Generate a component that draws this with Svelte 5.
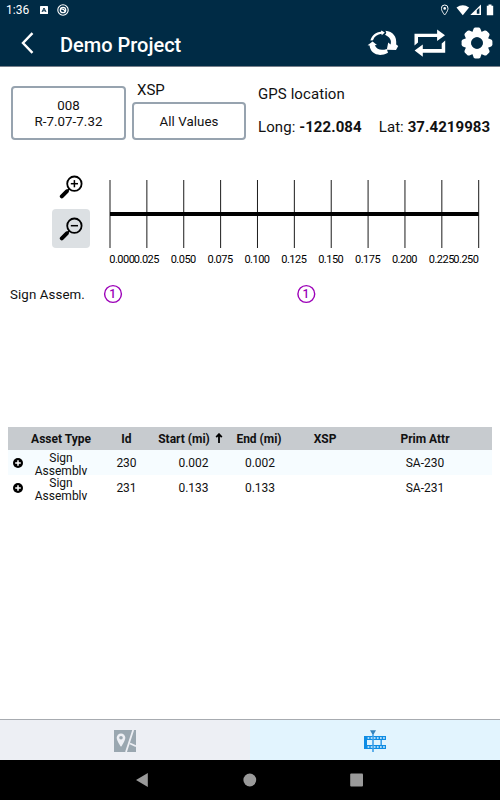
<script lang="ts">
  interface Asset {
    type: string;
    id: number;
    start: string;
    end: string;
    xsp: string;
    attr: string;
  }

  const columns = ["Asset Type", "Id", "Start (mi)", "End (mi)", "XSP", "Prim Attr"];

  const assets: Asset[] = [
    { type: "Sign Assembly", id: 230, start: "0.002", end: "0.002", xsp: "", attr: "SA-230" },
    { type: "Sign Assembly", id: 231, start: "0.133", end: "0.133", xsp: "", attr: "SA-231" },
  ];

  // ruler geometry, in svg units
  const left = 10;
  const step = 36.87;
  const ticks = Array.from({ length: 11 }, (_, i) => {
    const x = left + i * step;
    let labelX = x - 0.5;
    if (i === 0) labelX = x + 11.8;
    if (i === 10) labelX = x - 12.8;
    return { x, labelX, label: (i * 0.025).toFixed(3) };
  });

  const markers = [
    { x: 13, count: 1 },
    { x: 206.3, count: 1 },
  ];

  const teeth = [0, 45, 90, 135, 180, 225, 270, 315];
</script>

<div class="screen">
  <div class="status">
    <span class="clock">1:36</span>
    <svg class="badge-a" width="8" height="8" viewBox="0 0 8 8">
      <rect width="8" height="8" rx="0.6" fill="#fff" />
      <path d="M2 6 4 2 6 6M2.8 4.8h2.4" fill="none" stroke="#002b45" stroke-width="1" />
    </svg>
    <svg class="badge-ring" width="12" height="12" viewBox="0 0 12 12" fill="none" stroke="#fff">
      <circle cx="6" cy="6" r="5.2" stroke-width="1.1" />
      <circle cx="6" cy="6" r="2.7" stroke-width="1.3" />
      <path d="M3 4.6 6.5 5.4 8.5 8" stroke-width="1.2" />
    </svg>
    <svg class="signals" width="56" height="14" viewBox="0 0 56 14">
      <path d="M3.7 2a3.3 3.3 0 0 0-3.3 3.4C.4 8 3.7 12 3.7 12S7 8 7 5.4A3.3 3.3 0 0 0 3.7 2Z" fill="none" stroke="#fff" stroke-width="1" />
      <circle cx="3.7" cy="5.4" r="1.3" fill="#fff" />
      <path d="M15.5 4.6Q21.8 0 28.1 4.6L21.8 12.2Z" fill="#fff" />
      <path d="M29.3 12 40 1.5V12Z" fill="#fff" />
      <path d="M35.8 7.3 38.4 4.8V10.7H35.8Z" fill="#002b45" />
      <path d="M45.8 2.8h1.7V1.4h3v1.4h1.7v9.5h-6.4Z" fill="#fff" />
    </svg>
  </div>

  <header>
    <svg class="back" width="14" height="22" viewBox="0 0 14 22">
      <path d="M12.5 1.2 3 11l9.5 9.8" fill="none" stroke="#fff" stroke-width="2.4" />
    </svg>
    <h1>Demo Project</h1>
    <div class="actions">
      <svg width="32" height="28" viewBox="0 0 32 28" fill="#fff">
        <path d="M18.4 1.8C26 2.4 30 7.6 29.2 15.6l2 1.3-2.2 4.2-9.2-.3 1.4-7.2 2.4 1.9c1.2-4.2-.6-7.4-5.6-9.7 1.6-1.2 1.6-2.4.4-4Z" />
        <path d="M5.6 12.6 10 16l-2.2.3c2 4.3 6.4 5.6 12 3.6l1.2 3.8C12 28.6 3.2 24.8 2.6 16.6L.6 16.2Z" />
        <path d="M3.4 11.4C4.8 6.4 9 3 14 2.7l.4-1.3 3.4 2.2-3 2.6-.4-1.4C10.6 5.2 7.4 7.4 6 11.2Z" />
      </svg>
      <svg width="32" height="28" viewBox="0 0 32 28" fill="#fff">
        <path d="M.5 16.4V4.7h22.6V.4L31 6.2l-7.9 5.8V8H4v5.6Z" />
        <path d="M31.2 11.4v12.3H8.8v4L.6 21.6l8.2-6V20H27.7v-5.6Z" />
      </svg>
      <svg width="32" height="32" viewBox="-16 -16 32 32">
        {#each teeth as angle}
          <path d="M-5.4-9 -3.4-14.2Q-2.8-15.4-1.6-15.4H1.6Q2.8-15.4 3.4-14.2L5.4-9Z" fill="#fff" transform="rotate({angle})" />
        {/each}
        <circle r="8.8" fill="none" stroke="#fff" stroke-width="6" />
        <circle r="5.8" fill="#002b45" />
      </svg>
    </div>
  </header>

  <main>
    <section class="filters">
      <button class="box route">008<br />R-7.07-7.32</button>
      <div class="xsp">
        <span class="xsp-label">XSP</span>
        <button class="box values">All Values</button>
      </div>
      <div class="gps">
        <div class="gps-title">GPS location</div>
        <div class="coords">
          <span>Long: <b>-122.084</b></span>
          <span>Lat: <b>37.4219983</b></span>
        </div>
      </div>
    </section>

    <section class="ruler">
      <div class="zoom">
        {#each ["in", "out"] as mode}
          <button class="zoom-btn" class:active={mode === "out"} aria-label="Zoom {mode}">
            <svg width="24" height="24" viewBox="0 0 24 24" fill="none" stroke="#000">
              <circle cx="15.4" cy="8.7" r="7.2" stroke-width="1.8" />
              <path d="M11.8 8.7h7.2" stroke-width="1.5" />
              {#if mode === "in"}
                <path d="M15.4 5.1v7.2" stroke-width="1.5" />
              {/if}
              <path d="m10.3 13.9-2 2" stroke-width="2" />
              <path d="m7.8 16.3-5 5" stroke-width="4" stroke-linecap="round" />
            </svg>
          </button>
        {/each}
      </div>
      <svg class="scale" width="400" height="96" viewBox="0 0 400 96">
        {#each ticks as tick}
          <path d="M{tick.x} 5v68" stroke="#000" stroke-width="0.9" />
          <text x={tick.labelX} y="87.5" text-anchor="middle">{tick.label}</text>
        {/each}
        <path d="M10 39h368.7" stroke="#000" stroke-width="4" />
      </svg>
    </section>

    <section class="lane">
      <span class="lane-label">Sign Assem.</span>
      <svg width="400" height="20" viewBox="0 0 400 20">
        {#each markers as marker}
          <circle cx={marker.x} cy="10" r="8.4" fill="none" stroke="#9c00b8" stroke-width="1.4" />
          <text x={marker.x - 0.4} y="13.8" text-anchor="middle">{marker.count}</text>
        {/each}
      </svg>
    </section>

    <section class="table">
      <div class="row head">
        <span></span>
        {#each columns as column}
          <span>
            {column}
            {#if column === "Start (mi)"}
              <svg width="8" height="10" viewBox="0 0 8 10">
                <path d="M4 10V2M1.2 4.2 4 1.2l2.8 3" fill="none" stroke="#000" stroke-width="1.8" />
              </svg>
            {/if}
          </span>
        {/each}
      </div>
      {#each assets as asset}
        <div class="row">
          <span>
            <svg class="plus" width="10" height="10" viewBox="0 0 10 10">
              <circle cx="5" cy="5" r="5" />
              <path d="M5 2.2v5.6M2.2 5h5.6" stroke="#fff" stroke-width="1.5" />
            </svg>
          </span>
          <span class="type">{asset.type}</span>
          <span>{asset.id}</span>
          <span>{asset.start}</span>
          <span class="end">{asset.end}</span>
          <span>{asset.xsp}</span>
          <span>{asset.attr}</span>
        </div>
      {/each}
    </section>
  </main>

  <footer>
    <div class="tab">
      <svg width="22" height="22" viewBox="0 0 22 22">
        <path d="M0 0h22v22H0z" fill="#9aa7b0" />
        <path d="M19.2 0 12 22M16 13.5l6 2.8" fill="none" stroke="#edeff4" stroke-width="1.8" />
        <path d="M7 3.4a4.3 4.3 0 0 0-4.3 4.3C2.7 11 7 16.8 7 16.8s4.3-5.8 4.3-9.1A4.3 4.3 0 0 0 7 3.4Z" fill="#edeff4" />
        <circle cx="7" cy="7.8" r="1.8" fill="#9aa7b0" />
      </svg>
    </div>
    <div class="tab selected">
      <svg width="22" height="22" viewBox="0 0 22 22">
        <path d="M0 6h22v4H0zM0 15h22v4H0zM0 6h3v13H0z" fill="#0e8ce4" />
        <path d="M9 1v21M17.2 10v5" stroke="#3f9fe6" stroke-width="1.6" />
        <path d="M6 0.3h6L9.8 4H8.2Z" fill="#3584bd" />
        <path d="M3.6 8H22M3.6 17H22" stroke="#e2f4fe" stroke-width="1.4" stroke-dasharray="1.7 1.4" />
      </svg>
    </div>
  </footer>

  <nav>
    <svg width="250" height="16" viewBox="0 0 250 16" fill="#9a9a9a">
      <path d="M11 8 22.8 1v14Z" />
      <circle cx="124.8" cy="8" r="6.4" />
      <rect x="225.2" y="1.4" width="12.8" height="13" rx="1" />
    </svg>
  </nav>
</div>

<style>
  :global(body) {
    background: #fff;
  }

  .screen {
    display: flex;
    flex-direction: column;
    width: 500px;
    height: 800px;
    overflow: hidden;
    font-family: Roboto, sans-serif;
    color: #111;
    background: #fff;
  }

  .status {
    display: flex;
    align-items: center;
    height: 20px;
    padding: 0 3px 0 6px;
    background: #002b45;
    color: #fff;
  }

  .clock {
    width: 34px;
    font-size: 12px;
    line-height: 20px;
  }

  .badge-ring {
    margin-left: 9px;
  }

  .signals {
    margin-left: auto;
  }

  header {
    display: flex;
    align-items: center;
    box-sizing: border-box;
    height: 47px;
    padding: 0 7px 0 20px;
    border-bottom: 1px solid #777f8a;
    background: #002b45;
    color: #fff;
  }

  h1 {
    margin: 3px 0 0 26px;
    font-size: 20px;
    font-weight: 500;
  }

  .actions {
    display: flex;
    align-items: center;
    gap: 15px;
    margin-left: auto;
  }

  main {
    flex: 1;
  }

  button {
    padding: 0;
    border: 0;
    background: none;
    font: inherit;
    color: inherit;
  }

  .filters {
    display: flex;
    box-sizing: border-box;
    height: 98px;
    padding: 12px 0 0 11px;
  }

  .box {
    box-sizing: border-box;
    padding-top: 1px;
    border: 2px solid #97a3af;
    border-radius: 4px;
    font-size: 13.3px;
    line-height: 16px;
    letter-spacing: 0.05px;
  }

  .route {
    width: 115px;
    height: 54px;
    margin-top: 7px;
  }

  .xsp {
    display: flex;
    flex-direction: column;
    width: 114px;
    margin-left: 6px;
  }

  .xsp-label {
    height: 23px;
    padding-left: 5px;
    font-size: 15px;
    line-height: 22px;
  }

  .values {
    height: 38px;
  }

  .gps {
    margin-left: 12px;
    font-size: 15px;
    letter-spacing: 0.08px;
    white-space: nowrap;
  }

  .gps-title {
    padding-top: 5px;
    line-height: 20px;
  }

  .coords {
    display: flex;
    gap: 17px;
    margin-top: 13px;
    line-height: 20px;
  }

  .coords b {
    font-weight: 700;
  }

  .ruler {
    display: flex;
    height: 108px;
  }

  .zoom {
    display: flex;
    flex-direction: column;
    gap: 3px;
    margin-left: 52px;
    padding-top: 2px;
  }

  .zoom-btn {
    display: grid;
    place-items: center;
    width: 38px;
    height: 39px;
    border-radius: 4px;
  }

  .zoom-btn.active {
    background: #dce0e3;
  }

  .scale {
    margin: 10px 0 0 10px;
  }

  .scale text {
    font-size: 11px;
    letter-spacing: -0.5px;
  }

  .lane {
    display: flex;
    align-items: center;
    height: 22px;
    margin-top: 10px;
  }

  .lane-label {
    width: 90px;
    padding-left: 10px;
    font-size: 13.3px;
    letter-spacing: 0.1px;
    white-space: nowrap;
  }

  .lane text {
    font-size: 12px;
    font-weight: 500;
    fill: #9c00b8;
  }

  .table {
    margin: 122px 8px 0;
    font-size: 12px;
  }

  .row {
    display: grid;
    grid-template-columns: 20px 66px 65px 69px 62px 70px 130px;
    align-items: center;
    height: 25px;
    overflow: hidden;
    text-align: center;
  }

  .row:nth-child(2) {
    background: #f6fcff;
  }

  .head {
    height: 23px;
    background: #c7cbcf;
    font-weight: 700;
    white-space: nowrap;
  }

  .head span:nth-child(4) {
    margin-left: -6px;
  }

  .head svg {
    margin-left: 2px;
  }

  .plus {
    display: block;
    margin: 0 auto;
  }

  .type {
    height: 23px;
    padding-top: 1px;
    line-height: 13px;
    overflow: hidden;
  }

  .end {
    padding-left: 2px;
  }

  footer {
    display: flex;
    height: 40px;
    border-top: 1px solid #a7abb0;
  }

  .tab {
    display: grid;
    place-items: center;
    flex: 1;
    padding-top: 2px;
    background: #edeff4;
  }

  .tab.selected {
    background: #e2f4fe;
  }

  nav {
    display: grid;
    place-items: center;
    height: 40px;
    background: #000;
  }
</style>
